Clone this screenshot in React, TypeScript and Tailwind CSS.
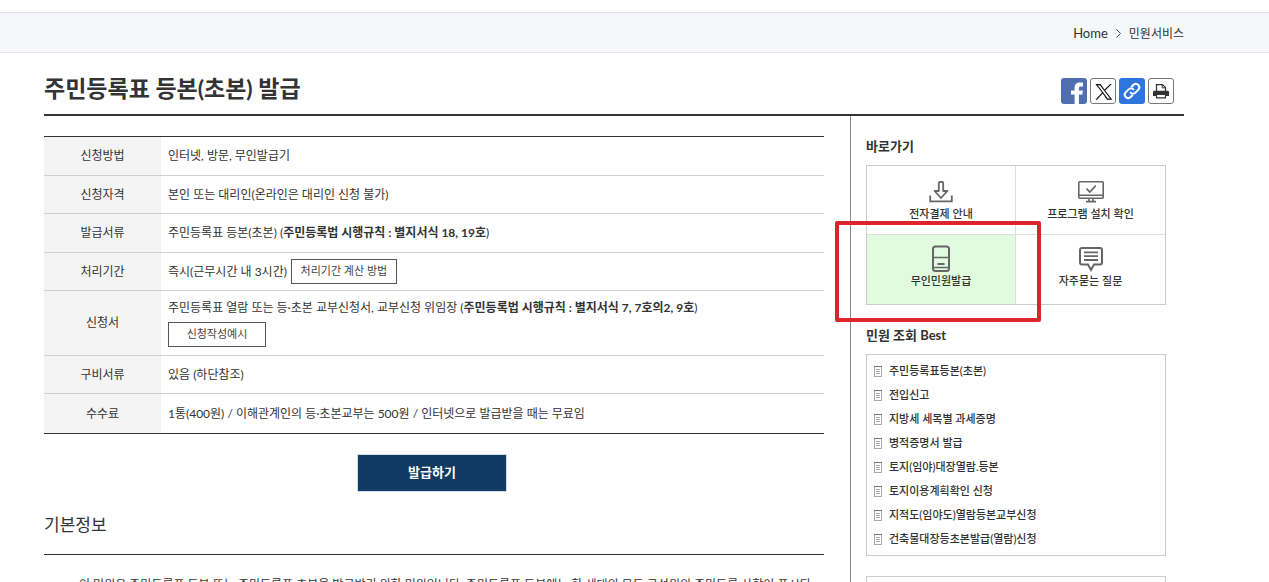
import React from 'react';
import { clsx } from 'clsx';

const rows: { label: string; height: string; content: React.ReactNode }[] = [
  { label: '신청방법', height: 'h-[39px]', content: '인터넷, 방문, 무인발급기' },
  { label: '신청자격', height: 'h-[38px]', content: '본인 또는 대리인(온라인은 대리인 신청 불가)' },
  {
    label: '발급서류',
    height: 'h-[39px]',
    content: (
      <>
        주민등록표 등본(초본) (<strong>주민등록법 시행규칙 : 별지서식 18, 19호</strong>)
      </>
    ),
  },
  {
    label: '처리기간',
    height: 'h-[38px]',
    content: (
      <div className="flex items-center gap-1">
        <span>즉시(근무시간 내 3시간)</span>
        <SmallButton className="w-[106px]">처리기간 계산 방법</SmallButton>
      </div>
    ),
  },
  {
    label: '신청서',
    height: 'h-[65px]',
    content: (
      <div className="flex flex-col items-start gap-1.5">
        <span>
          주민등록표 열람 또는 등·초본 교부신청서, 교부신청 위임장 (
          <strong>주민등록법 시행규칙 : 별지서식 7, 7호의2, 9호</strong>)
        </span>
        <SmallButton className="w-[98px]">신청작성예시</SmallButton>
      </div>
    ),
  },
  { label: '구비서류', height: 'h-[38px]', content: '있음 (하단참조)' },
  {
    label: '수수료',
    height: 'h-[39px]',
    content: '1통(400원) / 이해관계인의 등·초본교부는 500원 / 인터넷으로 발급받을 때는 무료임',
  },
];

const bestItems = [
  '주민등록표등본(초본)',
  '전입신고',
  '지방세 세목별 과세증명',
  '병적증명서 발급',
  '토지(임야)대장열람.등본',
  '토지이용계획확인 신청',
  '지적도(임야도)열람등본교부신청',
  '건축물대장등초본발급(열람)신청',
];

function SmallButton({ children, className }: { children: React.ReactNode; className?: string }) {
  return (
    <button
      type="button"
      className={clsx('h-[25px] shrink-0 border border-[#555] bg-white text-[11px] text-[#444]', className)}
    >
      {children}
    </button>
  );
}

function FacebookIcon() {
  return (
    <svg viewBox="0 0 26 26" className="size-full" fill="#fff" aria-hidden="true">
      <path d="M13.6 26V16.4H10V12.4H13.6V9.7C13.6 6.2 15.8 4.4 19 4.4H22V8.4H20C18.4 8.4 17.9 9 17.9 10.2V12.4H21.9L21.4 16.4H17.9V26Z" />
    </svg>
  );
}

function XIcon() {
  return (
    <svg viewBox="0 0 24 24" className="size-full" fill="#111" aria-hidden="true">
      <path d="M14.2 11.4 20.8 5H19.2L13.5 10.5 9.6 5H4.4L11 13.6 4.4 20.8H6L11.7 14.6 16 20.8H21.4ZM6.8 6.2H8.9L19 19.6H16.8Z" />
    </svg>
  );
}

function LinkIcon() {
  return (
    <svg viewBox="0 0 26 26" className="size-full" fill="none" stroke="#fff" strokeWidth="2" strokeLinecap="round" aria-hidden="true">
      <path d="M11.6 14.6a3.4 3.4 0 0 0 4.8 0l3-3a3.4 3.4 0 0 0-4.8-4.8l-2 2" />
      <path d="M14.4 11.4a3.4 3.4 0 0 0-4.8 0l-3 3a3.4 3.4 0 0 0 4.8 4.8l2-2" />
    </svg>
  );
}

function PrintIcon() {
  return (
    <svg viewBox="0 0 24 24" className="size-full" fill="none" aria-hidden="true">
      <path d="M7.5 12V5.6H13.5L16.5 8.4V12" stroke="#333" strokeWidth="1.2" />
      <path d="M13.2 5.6V8.8H16.5" stroke="#333" />
      <path d="M4 13.2a1.4 1.4 0 0 1 1.4-1.4h13.2a1.4 1.4 0 0 1 1.4 1.4V17H4Z" fill="#333" />
      <path d="M7.5 15.4h9v3.4h-9Z" fill="#fff" stroke="#333" strokeWidth="1.2" />
    </svg>
  );
}

function DownloadIcon() {
  return (
    <svg width="24" height="28" viewBox="0 0 24 28" fill="none" stroke="#666" strokeWidth="1.8" aria-hidden="true">
      <path d="M9.8 5.2Q9.8 4 11 4H13Q14.2 4 14.2 5.2V13H18.4L12 20 5.6 13H9.8Z" strokeLinejoin="round" />
      <path d="M1.2 17.5V23.4H22.8V17.5" />
    </svg>
  );
}

function MonitorIcon() {
  return (
    <svg width="28" height="28" viewBox="0 0 28 28" fill="none" stroke="#666" strokeWidth="1.6" aria-hidden="true">
      <rect x="1.8" y="3.8" width="24.4" height="16.4" rx="1" />
      <path d="M2 17.2H26M12 20.5V23.4M16 20.5V23.4M9 23.6H19" />
      <path d="M9.5 10.6 12.8 14 18.8 7.6" />
    </svg>
  );
}

function KioskIcon() {
  return (
    <svg width="20" height="28" viewBox="0 0 20 28" fill="none" stroke="#666" strokeWidth="2" aria-hidden="true">
      <rect x="2" y="1.5" width="16" height="24.5" rx="2.5" />
      <path d="M2 12.5H18M2 22.5H18" strokeWidth="1.4" />
      <path d="M6.5 19H13.5" />
    </svg>
  );
}

function QuestionIcon() {
  return (
    <svg width="26" height="28" viewBox="0 0 26 28" fill="none" stroke="#666" strokeWidth="2" aria-hidden="true">
      <path d="M4 2.9H22Q24 2.9 24 4.9V17.5Q24 19.5 22 19.5H16L13 25 10 19.5H4Q2 19.5 2 17.5V4.9Q2 2.9 4 2.9Z" />
      <path d="M6 7.4H20M6 11.2H20M6 15H20" strokeWidth="1.8" />
    </svg>
  );
}

function DocIcon() {
  return (
    <svg width="8" height="11" viewBox="0 0 8 11" className="shrink-0" fill="none" shapeRendering="crispEdges" aria-hidden="true">
      <path d="M0.5 0.5V10.5H7.5V0.5" stroke="#aaa" />
      <path d="M0 0.5H8" stroke="#607d8b" />
      <path d="M2 3.5H6M2 5.5H6M2 7.5H6" stroke="#aaa" />
    </svg>
  );
}

const shares = [
  { name: '페이스북', icon: <FacebookIcon />, style: 'bg-[#4f6fb0]' },
  { name: 'X', icon: <XIcon />, style: 'border border-[#777] bg-white' },
  { name: '링크 복사', icon: <LinkIcon />, style: 'bg-[#2f75df]' },
  { name: '인쇄', icon: <PrintIcon />, style: 'border border-[#777] bg-white' },
];

const shortcuts = [
  { label: '전자결제 안내', icon: <DownloadIcon />, style: 'border-r border-b pt-3' },
  { label: '프로그램 설치 확인', icon: <MonitorIcon />, style: 'border-b pt-3' },
  { label: '무인민원발급', icon: <KioskIcon />, style: 'border-r bg-[#e1fbde] pt-[10px]' },
  { label: '자주묻는 질문', icon: <QuestionIcon />, style: 'pt-[10px]' },
];

export default function App() {
  return (
    <div className="h-screen overflow-hidden bg-white pt-3 font-['Lato','Noto_Sans_CJK_KR',sans-serif] text-xs text-[#333]">
      <nav className="flex h-[41px] items-center justify-end gap-2 border-y border-[#e1e5ea] bg-[#f5f7fb] pt-0.5 pr-[85px]">
        <a href="#" className="text-[13px]">Home</a>
        <svg width="5" height="9" viewBox="0 0 5 9" fill="none" stroke="#444" aria-hidden="true">
          <path d="M0.5 0.5 4.5 4.5 0.5 8.5" />
        </svg>
        <a href="#">민원서비스</a>
      </nav>

      <div className="pr-[85px] pl-11">
        <header className="flex h-[63px] items-end justify-between border-b-2 border-[#333] pr-2.5 pb-2.5">
          <h1 className="text-[23px] leading-8 font-bold">주민등록표 등본(초본) 발급</h1>
          <div className="flex gap-[3px]">
            {shares.map((share) => (
              <button
                key={share.name}
                type="button"
                aria-label={share.name}
                className={clsx('size-[26px] overflow-hidden rounded-[3px]', share.style)}
              >
                {share.icon}
              </button>
            ))}
          </div>
        </header>

        <div className="flex items-stretch gap-[26px]">
          <main className="min-w-0 flex-1 pt-5">
            <table className="w-full border-separate border-spacing-0 border-y border-[#333]">
              <tbody>
                {rows.map((row, i) => {
                  const line = i < rows.length - 1 && 'border-b border-[#d0d0d0]';
                  return (
                    <tr key={row.label} className={row.height}>
                      <th scope="row" className={clsx('w-[117px] bg-[#f4f4f4] p-0 font-normal', line)}>
                        {row.label}
                      </th>
                      <td className={clsx('py-0 pr-0 pl-[7px]', line)}>{row.content}</td>
                    </tr>
                  );
                })}
              </tbody>
            </table>

            <div className="mt-5 flex justify-center pr-1">
              <button type="button" className="h-[38px] w-[150px] border border-[#d5dfea] bg-[#0f3a62] text-[13px] font-bold text-white">
                발급하기
              </button>
            </div>

            <h2 className="mt-4 border-b border-[#333] pt-1 pb-4 text-[17px] leading-[26px]">기본정보</h2>
            <p className="mt-[18px] pr-3 pl-[35px] leading-6">
              이 민원은 주민등록표 등본 또는 주민등록표 초본을 발급받기 위한 민원입니다. 주민등록표 등본에는 한 세대의 모든 구성원의 주민등록 사항이 표시되고, 주민등록표 초본에는 개인의 주민등록 사항이 표시됩니다.
            </p>
          </main>

          <aside className="w-[334px] shrink-0 border-l border-[#888] pt-5 pr-[18px] pl-[15px]">
            <h3 className="text-[13px] leading-5 font-bold">바로가기</h3>
            <div className="relative mt-[9px]">
              <div className="grid grid-cols-2 border border-[#ccc]">
                {shortcuts.map((item) => (
                  <a
                    key={item.label}
                    href="#"
                    className={clsx('flex h-[69px] flex-col items-center border-[#ddd] text-[11px] leading-4', item.style)}
                  >
                    {item.icon}
                    <span className="font-medium">{item.label}</span>
                  </a>
                ))}
              </div>
              <div className="pointer-events-none absolute top-14 -left-[31px] h-[101px] w-[206px] rounded-xs border-4 border-[#dc242c]" />
            </div>

            <h3 className="mt-5 text-[13px] leading-5 font-bold">민원 조회 Best</h3>
            <ul className="mt-[9px] border border-[#ccc] py-1 text-[11px] leading-6">
              {bestItems.map((item) => (
                <li key={item}>
                  <a href="#" className="flex items-center gap-[7px] pl-[7px] font-medium">
                    <DocIcon />
                    {item}
                  </a>
                </li>
              ))}
            </ul>
            <div className="mt-5 h-20 border border-[#ccc]" />
          </aside>
        </div>
      </div>
    </div>
  );
}
